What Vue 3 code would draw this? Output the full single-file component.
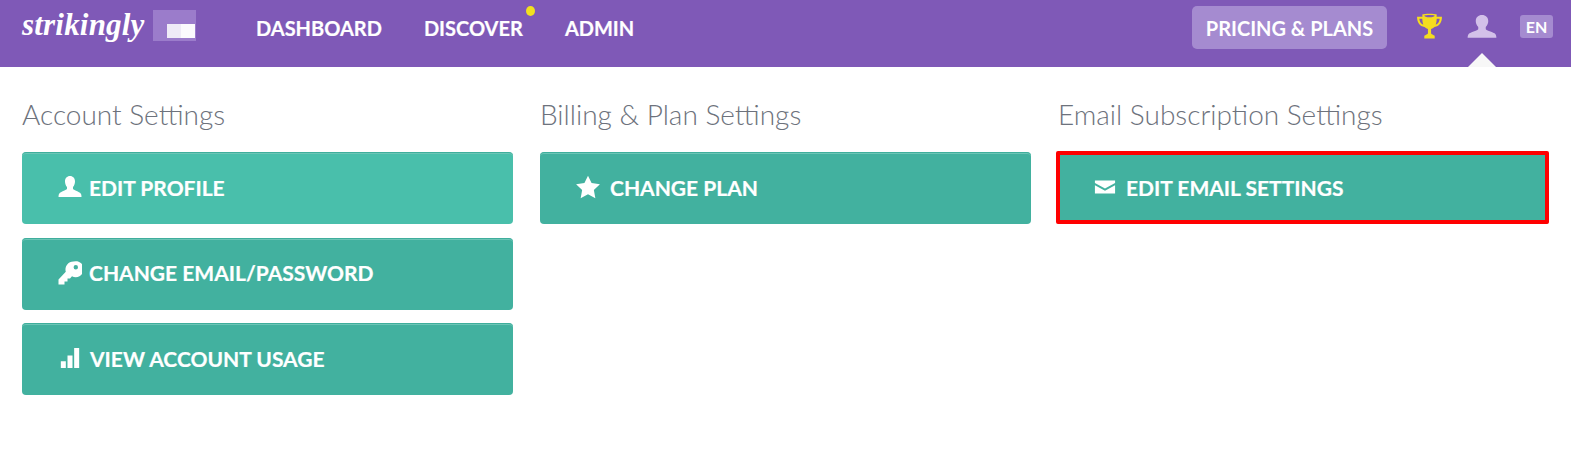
<script setup>
const columns = [
  {
    title: 'Account Settings',
    buttons: [
      { label: 'EDIT PROFILE', icon: 'user', light: true },
      { label: 'CHANGE EMAIL/PASSWORD', icon: 'key' },
      { label: 'VIEW ACCOUNT USAGE', icon: 'bars' }
    ]
  },
  {
    title: 'Billing & Plan Settings',
    buttons: [{ label: 'CHANGE PLAN', icon: 'star' }]
  },
  {
    title: 'Email Subscription Settings',
    buttons: [{ label: 'EDIT EMAIL SETTINGS', icon: 'mail', marked: true }]
  }
]

const iconPaths = {
  user: 'M12 1c-3 0-5 2.300-5 5.500 0 2.200.8 4.200 2 5.500v1.800c0 1-4.500 2.400-7 4-1 .7-1.500 2-1.500 4.200h23c0-2.200-.5-3.500-1.500-4.200-2.500-1.600-7-3-7-4V12c1.200-1.300 2-3.300 2-5.500C17 3.300 15 1 12 1z',
  key: 'M15.500 0.500a8 8 0 0 0-7.700 10.300L0.500 18.500V23.500H6.500V20.500H9.500V17.500H12L14 15.300A8 8 0 1 0 15.500 0.500zm2.300 3.500a2.200 2.200 0 1 1 0 4.400 2.200 2.200 0 0 1 0-4.400z',
  bars: 'M1 16h6v8H1zM9 9h6v15H9zM17 0h6v24h-6z',
  star: 'M12 1.500l3.300 6.900 7.700 1-5.600 5.300 1.400 7.600L12 18.600l-6.800 3.700 1.400-7.600L1 9.400l7.700-1z',
  mail: 'M1 5h22v2.500l-11 6-11-6zM1 10l11 6 11-6v9H1z'
}
</script>

<template>
  <div class="page">
    <header class="topbar">
      <div class="brand">
        <span class="logo">strikingly</span>
        <span class="logo-box"><i class="logo-chip"></i></span>
      </div>
      <nav class="nav">
        <a>DASHBOARD</a>
        <a class="has-dot">DISCOVER<i class="dot"></i></a>
        <a>ADMIN</a>
      </nav>
      <div class="tools">
        <a class="pricing">PRICING &amp; PLANS</a>
        <svg class="trophy" viewBox="0 0 26 26">
          <path d="M6 1.500c2-1 12-1 14 0l-.2 2H25c0 5.500-2.500 9-7.200 10-1 1-2.300 1.700-3.300 2v4c0 1 2.500 1.500 3.500 2.500v2.500h-10V22c1-1 3.500-1.500 3.500-2.500v-4c-1-.3-2.300-1-3.300-2C3.500 12.500 1 9 1 3.500h5.200zM3.200 5.500c.3 2.800 1.400 4.800 3.800 5.800-.5-1.700-.9-3.700-1-5.800zm19.600 0H20c-.1 2.100-.5 4.100-1 5.800 2.400-1 3.500-3 3.800-5.800zM8 2.500c0 1 2 1.700 5 1.700s5-.7 5-1.700c-2-.7-8-.7-10 0z" fill="#f5dd1f" fill-rule="evenodd"/>
        </svg>
        <span class="account">
          <svg class="user" viewBox="0 0 24 24" preserveAspectRatio="none"><path :d="iconPaths.user" fill="#d3c1e9"/></svg>
          <i class="caret"></i>
        </span>
        <span class="lang">EN</span>
      </div>
    </header>

    <main class="columns">
      <section v-for="col in columns" :key="col.title" class="column">
        <h2>{{ col.title }}</h2>
        <a
          v-for="btn in col.buttons"
          :key="btn.label"
          class="btn"
          :class="{ light: btn.light, marked: btn.marked }"
        >
          <svg class="icon" :class="btn.icon" viewBox="0 0 24 24"><path :d="iconPaths[btn.icon]" fill="#fff" fill-rule="evenodd"/></svg>
          <span class="label">{{ btn.label }}</span>
        </a>
      </section>
    </main>
  </div>
</template>

<style scoped>
.page {
  width: 1571px;
  height: 474px;
  overflow: hidden;
  background: #fff;
  font-family: Lato, "Liberation Sans", sans-serif;
}

.topbar {
  height: 67px;
  background: #7f59b7;
  display: flex;
  align-items: flex-start;
  padding: 0 18px 0 22px;
  box-sizing: border-box;
  color: #fff;
}

.brand {
  display: flex;
  align-items: flex-start;
  width: 234px;
  flex: none;
}

.logo {
  width: 131px;
  flex: none;
  padding-top: 7px;
  font-family: "Liberation Serif", serif;
  font-style: italic;
  font-weight: bold;
  font-size: 31px;
  line-height: 36px;
  letter-spacing: 0.2px;
}

.logo-box {
  width: 43px;
  height: 31px;
  margin-top: 10px;
  background: #9b7ccb;
  display: flex;
  align-items: flex-end;
  justify-content: flex-end;
  padding: 0 1px 3px 0;
  box-sizing: border-box;
}

.logo-chip {
  width: 28px;
  height: 14px;
  background: linear-gradient(90deg, #efebf7 50%, #fbfafd 50%);
}

.nav {
  display: flex;
  gap: 42px;
  padding-top: 16px;
  font-size: 20px;
  line-height: 24px;
  font-weight: 700;
  -webkit-text-stroke: 0.2px #fff;
}

.has-dot {
  position: relative;
}

.dot {
  position: absolute;
  right: -12px;
  top: -10px;
  width: 9px;
  height: 10px;
  border-radius: 50%;
  background: #f2e01f;
}

.tools {
  margin-left: auto;
  display: flex;
  align-items: flex-start;
}

.pricing {
  width: 195px;
  height: 43px;
  margin-top: 6px;
  border-radius: 5px;
  background: #a58bd0;
  text-align: center;
  line-height: 44px;
  font-size: 20px;
  font-weight: 700;
}

.trophy {
  width: 27px;
  height: 27px;
  margin: 13px 0 0 29px;
}

.account {
  position: relative;
  width: 28px;
  margin: 14px 0 0 25px;
}

.user {
  display: block;
  width: 30px;
  height: 26px;
  margin-left: -1px;
}

.caret {
  position: absolute;
  left: 0;
  top: 39px;
  width: 0;
  height: 0;
  border-left: 14px solid transparent;
  border-right: 14px solid transparent;
  border-bottom: 14px solid #f7f7f7;
}

.lang {
  width: 33px;
  height: 23px;
  margin: 15px 0 0 24px;
  border-radius: 3px;
  background: #a58bd0;
  text-align: center;
  line-height: 23px;
  font-size: 16px;
  font-weight: 700;
}

.columns {
  display: grid;
  grid-template-columns: repeat(3, 491px);
  gap: 27px;
  padding: 0 0 0 22px;
}

.column h2 {
  margin: 0 0 21px;
  padding-top: 30px;
  font-size: 28px;
  line-height: 34px;
  font-weight: 300;
  color: #6d727c;
}

.btn {
  position: relative;
  display: flex;
  align-items: center;
  height: 72px;
  margin-bottom: 13.5px;
  padding: 0 0 0 36px;
  box-sizing: border-box;
  border-radius: 4px;
  border-top: 1px solid #3fae9c;
  box-shadow: inset 0 1px 0 #6cc5b6;
  background: #42b19f;
  color: #fff;
  font-size: 21px;
  font-weight: 700;
}

.label {
  margin-top: -3px;
  -webkit-text-stroke: 0.2px #fff;
}

.btn.light {
  background: #49bfab;
}

.btn.marked::after {
  content: "";
  position: absolute;
  top: -2px;
  left: -2px;
  right: 0;
  bottom: 0;
  border: 4px solid #f00;
  border-radius: 2px;
}

.icon {
  width: 24px;
  height: 24px;
  margin: -3px 7px 0 0;
  flex: none;
}

.icon.bars {
  width: 20px;
  height: 20px;
  margin-right: 10px;
  margin-left: 2px;
}

.icon.mail {
  width: 22px;
  height: 22px;
  margin-right: 10px;
}

.icon.star {
  width: 26px;
  height: 26px;
  margin-left: -1px;
  margin-right: 9px;
}
</style>

<style>
html,
body {
  margin: 0;
  background: #fff;
}
</style>
